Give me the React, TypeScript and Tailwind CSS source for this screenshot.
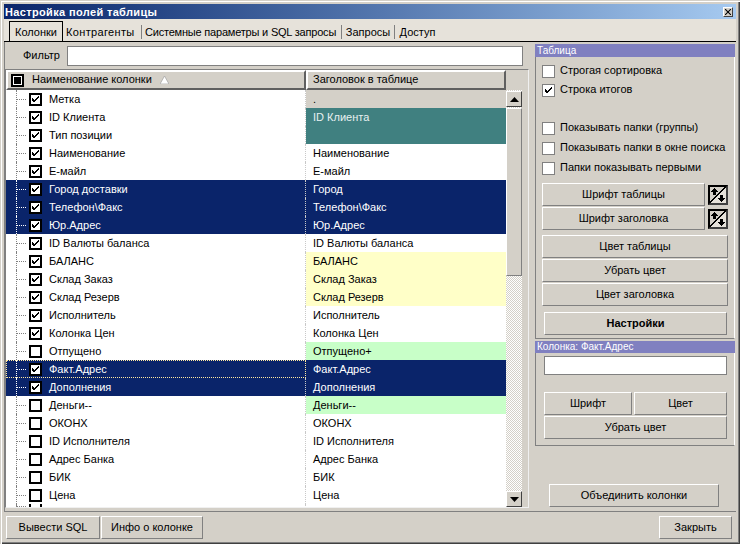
import React from "react";

const F = "[font-family:'Liberation_Sans',sans-serif]";

type Row = { n: string; t: string; c: boolean; k?: "gray" | "teal" | "navy" | "yellow" | "green" | "focus" };
const rows: Row[] = [
  { n: "Метка", t: ".", c: true, k: "gray" },
  { n: "ID Клиента", t: "ID Клиента", c: true, k: "teal" },
  { n: "Тип позиции", t: "", c: true, k: "teal" },
  { n: "Наименование", t: "Наименование", c: true },
  { n: "Е-майл", t: "Е-майл", c: true },
  { n: "Город доставки", t: "Город", c: true, k: "navy" },
  { n: "Телефон\\Факс", t: "Телефон\\Факс", c: true, k: "navy" },
  { n: "Юр.Адрес", t: "Юр.Адрес", c: true, k: "navy" },
  { n: "ID Валюты баланса", t: "ID Валюты баланса", c: true },
  { n: "БАЛАНС", t: "БАЛАНС", c: true, k: "yellow" },
  { n: "Склад Заказ", t: "Склад Заказ", c: true, k: "yellow" },
  { n: "Склад Резерв", t: "Склад Резерв", c: true, k: "yellow" },
  { n: "Исполнитель", t: "Исполнитель", c: true },
  { n: "Колонка Цен", t: "Колонка Цен", c: true },
  { n: "Отпущено", t: "Отпущено+", c: false, k: "green" },
  { n: "Факт.Адрес", t: "Факт.Адрес", c: true, k: "focus" },
  { n: "Дополнения", t: "Дополнения", c: true, k: "navy" },
  { n: "Деньги--", t: "Деньги--", c: false, k: "green" },
  { n: "ОКОНХ", t: "ОКОНХ", c: false },
  { n: "ID Исполнителя", t: "ID Исполнителя", c: false },
  { n: "Адрес Банка", t: "Адрес Банка", c: false },
  { n: "БИК", t: "БИК", c: false },
  { n: "Цена", t: "Цена", c: false },
  { n: "", t: "", c: false },
];

const bevel = "border border-t-white border-l-white border-r-[#808080] border-b-[#808080]";

function Btn({ label, className = "", bold }: { label: string; className?: string; bold?: boolean }) {
  return (
    <div className={`flex items-center justify-center bg-[#d4d0c8] ${bevel} ${bold ? "font-bold" : ""} ${className}`}>
      {label}
    </div>
  );
}

function Tick() {
  return (
    <svg width="9" height="9" viewBox="0 0 9 9" shapeRendering="crispEdges">
      <path d="M1 3h1v1h1v1h1V4h1V3h1V2h1V1h1v2h-1v1h-1v1h-1v1h-1v1h-1V7h-1V6h-1V5H1Z" fill="#000" />
    </svg>
  );
}

function Check({ c }: { c: boolean }) {
  return (
    <div className="flex h-[13px] w-[13px] shrink-0 items-center justify-center border-2 border-black bg-white">
      {c && <Tick />}
    </div>
  );
}

function Opt({ label, c, className = "" }: { label: string; c?: boolean; className?: string }) {
  return (
    <div className={`flex h-[13px] items-center gap-[5px] whitespace-nowrap ${className}`}>
      <div className="flex h-[13px] w-[13px] shrink-0 items-center justify-center border border-[#808080] bg-white">
        {c && <Tick />}
      </div>
      <span className="pb-[2px]">{label}</span>
    </div>
  );
}

function FontIcon() {
  return (
    <div className="mt-[2px] h-[20px] w-[20px] shrink-0 border-2 border-b-[#404040] border-l-black border-r-[#404040] border-t-black bg-[#d4d0c8]">
      <svg width="16" height="16" viewBox="0 0 16 16" shapeRendering="crispEdges">
        <path d="M0 16 L16 0 L16 16 Z" fill="#e6e2da" />
        <path d="M0 15.5 L15.5 0" stroke="#000" strokeWidth="1" />
        <path d="M4 1h1v1h1v1h1v1h1v1H6v3H3V5H1V4h1V3h1V2h1Z" fill="#000" />
        <path d="M10 8h3v3h2v1h-1v1h-1v1h-1v1h-1v-1h-1v-1H9v-1H8v-1h2Z" fill="#000" />
      </svg>
    </div>
  );
}

function Arrow({ up }: { up?: boolean }) {
  return (
    <div className="flex h-[16px] w-[16px] shrink-0 items-center justify-center border border-t-white border-l-white border-r-[#404040] border-b-[#404040] bg-[#d4d0c8]">
      <svg width="9" height="5" viewBox="0 0 9 5">
        <path d={up ? "M4.5 0 L9 5 L0 5 Z" : "M0 0 L9 0 L4.5 5 Z"} fill="#000" />
      </svg>
    </div>
  );
}

function GridRow({ r, i }: { r: Row; i: number }) {
  const sel = r.k === "navy" || r.k === "focus";
  const right =
    r.k === "gray" ? "bg-[#d4d0c8] text-black"
    : r.k === "teal" ? "bg-[#408080] text-[#e8f0f0]"
    : r.k === "yellow" ? "bg-[#ffffc8] text-black"
    : r.k === "green" ? "bg-[#c8ffc8] text-black"
    : sel ? "bg-[#0a246a] text-white"
    : "bg-white text-black";
  const last = i === rows.length - 1;
  return (
    <div className={`flex shrink-0 ${last ? "h-[4px] overflow-hidden" : "h-[18px]"}`}>
      <div className={`relative flex w-[300px] shrink-0 items-center border-r border-dotted border-r-[#c8c8c8] ${sel ? "bg-[#0a246a] text-white" : "bg-white text-black"}`}>
        <div className="relative h-full w-[23px] shrink-0">
          <div className={`absolute bottom-0 left-[10px] top-0 border-l border-dotted ${sel ? "border-l-white" : "border-l-[#808080]"}`} />
          <div className={`absolute left-[10px] top-1/2 w-[10px] border-t border-dotted ${sel ? "border-t-white" : "border-t-[#808080]"}`} />
        </div>
        <Check c={r.c} />
        <span className="ml-[7px] whitespace-nowrap">{r.n}</span>
        {r.k === "focus" && <div className="absolute inset-0 -mr-px border border-dotted border-[#ffe8a0]" />}
      </div>
      <div className={`flex w-[200px] shrink-0 items-center pl-[7px] ${right}`}>
        <span className="whitespace-nowrap">{r.t}</span>
      </div>
    </div>
  );
}

export default function App() {
  return (
    <div className={`flex h-[544px] w-[740px] flex-col overflow-hidden bg-[#d4d0c8] p-[4px] text-[11px] leading-none text-black shadow-[inset_1px_1px_0_#d4d0c8,inset_2px_2px_0_#ffffff,inset_-1px_-1px_0_#404040,inset_-2px_-2px_0_#808080] ${F}`}>
      <div className="flex h-[15px] shrink-0 items-center justify-between bg-gradient-to-r from-[#0a246a] to-[#a6caf0] pl-px pr-[3px]">
        <span className="pt-px font-bold tracking-[0.35px] text-white">Настройка полей таблицы</span>
        <div className="flex h-[10px] w-[10px] items-center justify-center border border-t-white border-l-white border-r-[#404040] border-b-[#404040] bg-[#d4d0c8]">
          <svg width="6" height="6" viewBox="0 0 6 6">
            <path d="M0 0 L6 6 M6 0 L0 6" stroke="#000" strokeWidth="1.1" />
          </svg>
        </div>
      </div>

      <div className="flex h-[23px] shrink-0 items-end border-b border-b-black bg-[#e6e2da] pl-[5px]">
        <div className="flex h-[20px] w-[54px] items-center justify-center border border-b-0 border-black bg-[#e6e2da] pt-[2px]">Колонки</div>
        <div className="flex h-[19px] w-[78px] items-center pl-[3px] pt-[1px] tracking-[0.35px]">Контрагенты</div>
        <div className="mb-[2px] h-[14px] border-l border-l-[#808080]" />
        <div className="flex h-[19px] w-[199px] items-center pl-[3px] pt-[1px] tracking-[-0.2px]">Системные параметры и SQL запросы</div>
        <div className="mb-[2px] h-[14px] border-l border-l-[#808080]" />
        <div className="flex h-[19px] w-[52px] items-center justify-center pt-[1px]">Запросы</div>
        <div className="mb-[2px] h-[14px] border-l border-l-[#808080]" />
        <div className="flex h-[19px] w-[45px] items-center justify-center pt-[1px]">Доступ</div>
      </div>

      <div className="flex min-h-0 flex-1 flex-col border-b border-l border-b-[#808080] border-l-[#808080]">
        <div className="flex min-h-0 flex-1">
          <div className="flex w-[524px] shrink-0 flex-col pb-[3px] pt-[4px]">
            <div className="flex h-[20px] shrink-0 items-center">
              <span className="ml-[18px] w-[44px] pb-[2px]">Фильтр</span>
              <div className="h-[20px] w-[456px] border border-[#808080] bg-white" />
            </div>
            <div className="mt-[3px] flex min-h-0 flex-1 flex-col border border-[#808080] border-b-[#f0f0f0] border-r-[#f0f0f0] bg-[#d4d0c8]">
              <div className="flex h-[20px] shrink-0">
                <div className="flex w-[300px] shrink-0 items-center border-2 border-t-white border-l-white border-r-[#606060] border-b-[#606060] pl-[3px]">
                  <div className="flex h-[13px] w-[13px] items-center justify-center border-2 border-black bg-white">
                    <div className="h-[7px] w-[7px] bg-black" />
                  </div>
                  <span className="ml-[8px] pb-[2px]">Наименование колонки</span>
                  <svg className="ml-[8px]" width="9" height="8" viewBox="0 0 9 8">
                    <path d="M4.5 0 L9 8 L0 8 Z" fill="#fff" stroke="#a0a0a0" strokeWidth="0.7" />
                  </svg>
                </div>
                <div className="flex w-[200px] shrink-0 items-center border-2 border-t-white border-l-white border-r-[#606060] border-b-[#606060] pb-[2px] pl-[5px]">
                  Заголовок в таблице
                </div>
              </div>
              <div className="flex min-h-0 flex-1">
                <div className="flex w-[500px] shrink-0 flex-col overflow-hidden bg-white">
                  {rows.map((r, i) => <GridRow key={i} r={r} i={i} />)}
                </div>
                <div className="flex w-[16px] shrink-0 flex-col bg-[repeating-conic-gradient(#ffffff_0_25%,#d4d0c8_0_50%)] bg-[length:2px_2px] pt-[1px]">
                  <Arrow up />
                  <div className={`mt-px h-[168px] w-[16px] bg-[#d4d0c8] ${bevel}`} />
                  <div className="flex-1" />
                  <Arrow />
                </div>
              </div>
            </div>
          </div>

          <div className="ml-[6px] flex w-[200px] shrink-0 flex-col">
            <div className="mt-[2px] flex h-[13px] shrink-0 items-center bg-[#8080c0] pl-[2px] text-[10px] text-white">Таблица</div>
            <div className="flex h-[282px] shrink-0 flex-col border border-t-0 border-l-[#808080] border-b-[#808080] border-r-white px-[6px] pt-[8px]">
              <Opt label="Строгая сортировка" />
              <Opt label="Строка итогов" c className="mt-[6px]" />
              <Opt label="Показывать папки (группы)" className="mt-[25px]" />
              <Opt label="Показывать папки в окне поиска" className="mt-[7px]" />
              <Opt label="Папки показывать первыми" className="mt-[7px]" />
              <div className="mt-[8px] flex gap-[3px]">
                <Btn label="Шрифт таблицы" className="h-[23px] flex-1" />
                <FontIcon />
              </div>
              <div className="mt-px flex gap-[3px]">
                <Btn label="Шрифт заголовка" className="h-[23px] flex-1" />
                <FontIcon />
              </div>
              <Btn label="Цвет таблицы" className="mt-[5px] h-[23px]" />
              <Btn label="Убрать цвет" className="mt-px h-[23px]" />
              <Btn label="Цвет заголовка" className="mt-px h-[23px]" />
              <Btn label="Настройки" bold className="ml-[2px] mr-px mt-[6px] h-[23px]" />
            </div>
            <div className="mt-[2px] flex h-[12px] shrink-0 items-center bg-[#8080c0] pl-[2px] text-[10px] text-white">Колонка: Факт.Адрес</div>
            <div className="flex h-[93px] shrink-0 flex-col border border-t-0 border-l-[#808080] border-b-[#808080] border-r-white pl-[8px] pr-[7px] pt-[3px]">
              <div className="h-[19px] border border-[#808080] bg-white" />
              <div className="mt-[17px] flex gap-[2px]">
                <Btn label="Шрифт" className="h-[23px] w-[88px]" />
                <Btn label="Цвет" className="h-[23px] flex-1" />
              </div>
              <Btn label="Убрать цвет" className="mt-px h-[23px]" />
            </div>
            <Btn label="Объединить колонки" className="ml-[14px] mt-[38px] h-[23px] w-[170px]" />
          </div>
        </div>
      </div>

      <div className="flex h-[28px] shrink-0 items-start justify-between pl-[2px] pr-[4px] pt-[4px]">
        <div className="flex gap-px">
          <Btn label="Вывести SQL" className="h-[23px] w-[94px]" />
          <Btn label="Инфо о колонке" className="h-[23px] w-[102px]" />
        </div>
        <Btn label="Закрыть" className="h-[23px] w-[73px]" />
      </div>
    </div>
  );
}
